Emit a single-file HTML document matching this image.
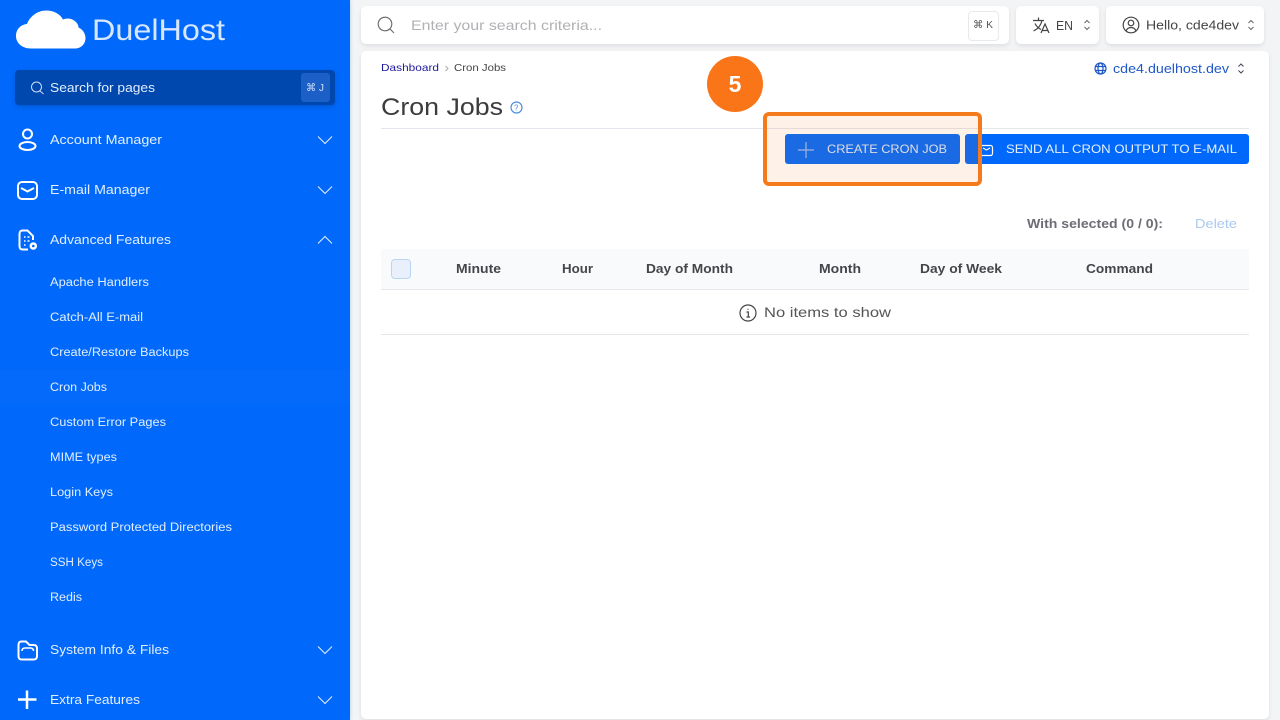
<!DOCTYPE html>
<html lang="en">
<head>
<meta charset="utf-8">
<title>Cron Jobs</title>
<style>
html,body{margin:0;padding:0;width:1280px;height:720px;overflow:hidden;background:#f3f4f6}
body{position:relative;font-family:"Liberation Sans",sans-serif}
.box{position:absolute;box-sizing:border-box}
.card{background:#fff;border-radius:5px;box-shadow:0 2px 5px rgba(0,0,0,.09)}
svg{position:absolute;left:0;top:0}
text{font-family:"Liberation Sans",sans-serif}
.side text{fill:#e2eeff}
</style>
</head>
<body>
<div class="box" style="left:0;top:0;width:350px;height:720px;background:#0069fb;box-shadow:0 0 4px rgba(0,105,251,.25)"></div>
<div class="box" style="left:0;top:370px;width:350px;height:34px;background:#036afb"></div>
<div class="box" style="left:15px;top:70px;width:320px;height:35px;background:#0047ae;border-radius:4px;box-shadow:0 2px 5px rgba(0,50,130,.3)"></div>
<div class="box" style="left:301px;top:73px;width:29px;height:29px;background:#1c5fc6;border-radius:3px"></div>

<div class="box card" style="left:361px;top:6px;width:648px;height:38px"></div>
<div class="box" style="left:968px;top:11px;width:31px;height:30px;border:1px solid #e8e9ec;border-radius:4px;background:#fff"></div>
<div class="box card" style="left:1016px;top:6px;width:83px;height:38px"></div>
<div class="box card" style="left:1106px;top:6px;width:158px;height:38px"></div>
<div class="box card" style="left:361px;top:51px;width:908px;height:668px"></div>

<div class="box" style="left:381px;top:128px;width:868px;height:1px;background:#e4e6ee"></div>
<div class="box" style="left:785px;top:134px;width:175px;height:30px;background:#0069fb;border-radius:3px"></div>
<div class="box" style="left:965px;top:134px;width:284px;height:30px;background:#0069fb;border-radius:3px"></div>
<div class="box" style="left:381px;top:249px;width:868px;height:41px;background:#f9fafb;border-bottom:1px solid #e5e7ea"></div>
<div class="box" style="left:391px;top:259px;width:20px;height:20px;background:#e9f0fb;border:1px solid #b9d5f6;border-radius:4px"></div>
<div class="box" style="left:381px;top:334px;width:868px;height:1px;background:#e5e7ea"></div>

<svg width="1280" height="720" viewBox="0 0 1280 720" xmlns="http://www.w3.org/2000/svg">
  <g class="side">
    <path d="M31 48.500C22 48.500 16 43 16 36C16 29 21 24.500 27 24C30 16 38 10.500 46 10.500C54 10.500 60 14 63 19.500C66 18 71 18 74 20.500C77 22.500 78.500 25 78.500 27.500C83 29.500 85.500 34 85.500 38C85.500 44 81 48.500 75 48.500Z" fill="#fff"/>
    <text x="92" y="40" font-size="30" textLength="133" lengthAdjust="spacingAndGlyphs" style="fill:#d6e7ff">DuelHost</text>
    <circle cx="36.500" cy="87" r="5" fill="none" stroke="#cfe0fa" stroke-width="1"/>
    <path d="M40 91L43.500 94" stroke="#cfe0fa" stroke-width="1"/>
    <text x="50" y="92" font-size="13" textLength="105" lengthAdjust="spacingAndGlyphs">Search for pages</text>
    <text x="306" y="91" font-size="10.500" textLength="18" lengthAdjust="spacingAndGlyphs" style="fill:#cfe0fa">⌘ J</text>

    <g fill="none" stroke="#fff" stroke-width="2">
      <circle cx="27.500" cy="134" r="4.500"/>
      <ellipse cx="27.500" cy="146" rx="8" ry="4"/>
      <rect x="18" y="182" width="19" height="17" rx="4"/>
      <path d="M21 188L27.500 191.500L34 188"/>
      <path d="M28 249.500H23C20.500 249.500 19.500 248.500 19.500 246V234C19.500 231.500 20.500 230.500 23 230.500H27.500L33 236V240"/>
      <path d="M24 237H25.500M24 241H25.500M24 245H25.500M27.500 237H29.500M27.500 241H29.500" stroke-width="1.500"/>
      <path d="M21.500 641.500H26L29.500 645H33.500C36 645 37 646.500 37 648.500V656C37 658.500 36 659.500 33.500 659.500H22C19.500 659.500 18.500 658.500 18.500 656V645C18.500 642.500 19.500 641.500 21.500 641.500Z"/>
      <path d="M22 651C22 649 23 648 25 648H30.500C32.500 648 33.500 649 33.500 651" stroke-width="1.500"/>
      <path d="M27 690.500V709M18 699.500H36.500" stroke-width="2.500"/>
    </g>
    <circle cx="33.300" cy="246" r="3.800" fill="#fff"/>
    <circle cx="33.300" cy="246" r="1.300" fill="#0069fb"/>

    <text x="50" y="144" font-size="13" textLength="112" lengthAdjust="spacingAndGlyphs">Account Manager</text>
    <text x="50" y="194" font-size="13" textLength="100" lengthAdjust="spacingAndGlyphs">E-mail Manager</text>
    <text x="50" y="244" font-size="13" textLength="121" lengthAdjust="spacingAndGlyphs">Advanced Features</text>
    <text x="50" y="654" font-size="13" textLength="119" lengthAdjust="spacingAndGlyphs">System Info &amp; Files</text>
    <text x="50" y="704" font-size="13" textLength="90" lengthAdjust="spacingAndGlyphs">Extra Features</text>

    <g font-size="11.500">
      <text x="50" y="286" textLength="99" lengthAdjust="spacingAndGlyphs">Apache Handlers</text>
      <text x="50" y="321" textLength="93" lengthAdjust="spacingAndGlyphs">Catch-All E-mail</text>
      <text x="50" y="356" textLength="139" lengthAdjust="spacingAndGlyphs">Create/Restore Backups</text>
      <text x="50" y="391" textLength="57" lengthAdjust="spacingAndGlyphs">Cron Jobs</text>
      <text x="50" y="426" textLength="116" lengthAdjust="spacingAndGlyphs">Custom Error Pages</text>
      <text x="50" y="461" textLength="67" lengthAdjust="spacingAndGlyphs">MIME types</text>
      <text x="50" y="496" textLength="63" lengthAdjust="spacingAndGlyphs">Login Keys</text>
      <text x="50" y="531" textLength="182" lengthAdjust="spacingAndGlyphs">Password Protected Directories</text>
      <text x="50" y="566" textLength="53" lengthAdjust="spacingAndGlyphs">SSH Keys</text>
      <text x="50" y="601" textLength="32" lengthAdjust="spacingAndGlyphs">Redis</text>
    </g>

    <g fill="none" stroke="#e6f0ff" stroke-width="1">
      <path d="M318 136.500L325 143.500L332 136.500"/>
      <path d="M318 186.500L325 193.500L332 186.500"/>
      <path d="M318 243.500L325 236.500L332 243.500"/>
      <path d="M318 646.500L325 653.500L332 646.500"/>
      <path d="M318 696.500L325 703.500L332 696.500"/>
    </g>
  </g>

  <circle cx="385" cy="24" r="6.800" fill="none" stroke="#666" stroke-width="1.100"/>
  <path d="M390 29L394 33" stroke="#666" stroke-width="1.100"/>
  <text x="411" y="30" font-size="14" fill="#b0b1b4" textLength="191" lengthAdjust="spacingAndGlyphs">Enter your search criteria...</text>
  <text x="973" y="28" font-size="10.500" fill="#555" textLength="20" lengthAdjust="spacingAndGlyphs">⌘ K</text>

  <g fill="none" stroke="#444" stroke-width="1.200">
    <path d="M1033 20.500H1044M1038.500 17.500V20.500M1042 20.500C1041 25 1038 29 1033.500 31M1035 23.500C1036.500 26.500 1039 28.500 1041 29.500"/>
    <path d="M1041 33L1045 24L1049 33M1042.500 30.500H1047.500"/>
  </g>
  <text x="1056" y="30" font-size="12.500" fill="#444" textLength="17" lengthAdjust="spacingAndGlyphs">EN</text>
  <g fill="none" stroke="#666" stroke-width="1">
    <path d="M1084.500 23L1087 20.500L1089.500 23M1084.500 27L1087 29.500L1089.500 27"/>
    <path d="M1248.500 23L1251 20.500L1253.500 23M1248.500 27L1251 29.500L1253.500 27"/>
    <path d="M1238.500 66.500L1241 64L1243.500 66.500M1238.500 70.500L1241 73L1243.500 70.500" stroke="#445"/>
  </g>
  <g fill="none" stroke="#444" stroke-width="1.200">
    <circle cx="1131" cy="25" r="7.800"/>
    <circle cx="1131" cy="23" r="2.800"/>
    <path d="M1126 31C1127 28.500 1129 27.500 1131 27.500C1133 27.500 1135 28.500 1136 31"/>
  </g>
  <text x="1146" y="29.500" font-size="13" fill="#444" textLength="93" lengthAdjust="spacingAndGlyphs">Hello, cde4dev</text>

  <text x="381" y="71" font-size="10.500" fill="#1e1a9e" textLength="58" lengthAdjust="spacingAndGlyphs">Dashboard</text>
  <path d="M445.500 66L448 68.500L445.500 71" fill="none" stroke="#aaa" stroke-width="1"/>
  <text x="454" y="71" font-size="10.500" fill="#444" textLength="52" lengthAdjust="spacingAndGlyphs">Cron Jobs</text>

  <text x="381" y="115" font-size="24" fill="#3c3c3e" textLength="122" lengthAdjust="spacingAndGlyphs">Cron Jobs</text>
  <circle cx="516.500" cy="107.500" r="5.500" fill="none" stroke="#4d8fdd" stroke-width="1.200"/>
  <text x="514" y="110.500" font-size="8" fill="#4d8fdd">?</text>

  <g fill="none" stroke="#1f57c8" stroke-width="1.200">
    <circle cx="1100.500" cy="68.500" r="5.500"/>
    <ellipse cx="1100.500" cy="68.500" rx="2.500" ry="5.500"/>
    <path d="M1095.500 66.500H1105.500M1095.500 70.500H1105.500"/>
  </g>
  <text x="1113" y="73" font-size="12.500" fill="#1f57c8" textLength="116" lengthAdjust="spacingAndGlyphs">cde4.duelhost.dev</text>

  <path d="M806 142V158M798 150H814" stroke="#9dbcf0" stroke-width="1.200"/>
  <text x="827" y="153" font-size="12" fill="#dde8fb" textLength="120" lengthAdjust="spacingAndGlyphs">CREATE CRON JOB</text>
  <rect x="980.500" y="145.500" width="12" height="10" rx="2" fill="none" stroke="#fff" stroke-width="1.200"/>
  <path d="M983 148L986.500 150L990 148" fill="none" stroke="#fff" stroke-width="1.100"/>
  <text x="1006" y="153" font-size="12" fill="#e6f0ff" textLength="231" lengthAdjust="spacingAndGlyphs">SEND ALL CRON OUTPUT TO E-MAIL</text>

  <text x="1027" y="228" font-size="12.500" font-weight="bold" fill="#6c6e74" textLength="136" lengthAdjust="spacingAndGlyphs">With selected (0 / 0):</text>
  <text x="1195" y="228" font-size="12.500" fill="#a9c9f1" textLength="42" lengthAdjust="spacingAndGlyphs">Delete</text>

  <g font-size="12.500" font-weight="bold" fill="#45464a">
    <text x="456" y="273" textLength="45" lengthAdjust="spacingAndGlyphs">Minute</text>
    <text x="562" y="273" textLength="31" lengthAdjust="spacingAndGlyphs">Hour</text>
    <text x="646" y="273" textLength="87" lengthAdjust="spacingAndGlyphs">Day of Month</text>
    <text x="819" y="273" textLength="42" lengthAdjust="spacingAndGlyphs">Month</text>
    <text x="920" y="273" textLength="82" lengthAdjust="spacingAndGlyphs">Day of Week</text>
    <text x="1086" y="273" textLength="67" lengthAdjust="spacingAndGlyphs">Command</text>
  </g>

  <circle cx="748" cy="313" r="8" fill="none" stroke="#444" stroke-width="1.200"/>
  <path d="M746.500 312H748.300V317M746.500 317H750M748 308.800V309.800" fill="none" stroke="#444" stroke-width="1.200"/>
  <text x="764" y="317" font-size="14" fill="#555" textLength="127" lengthAdjust="spacingAndGlyphs">No items to show</text>
</svg>

<div class="box" style="left:763px;top:112px;width:219px;height:74px;border:4px solid #f47a1c;border-radius:6px;background:rgba(249,115,22,.1)"></div>
<div class="box" style="left:707px;top:56px;width:56px;height:56px;border-radius:50%;background:#f97518;color:#fff;font-weight:bold;font-size:23px;line-height:56px;text-align:center">5</div>
</body>
</html>
